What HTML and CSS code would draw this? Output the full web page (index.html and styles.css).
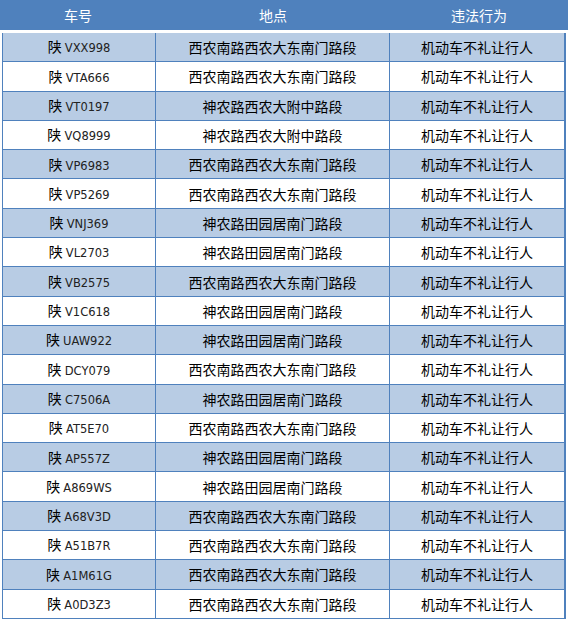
FILE: index.html
```html
<!DOCTYPE html>
<html lang="zh">
<head>
<meta charset="utf-8">
<title>违法记录</title>
<link rel="stylesheet" href="styles.css">
</head>
<body>
<div class="head">
  <div class="hc">车号</div>
  <div class="hc">地点</div>
  <div class="hc">违法行为</div>
</div>
<div class="tbl">
  <div class="row alt"><div class="c"><span class="no">陕 <span class="pl">VXX998</span></span></div><div class="c">西农南路西农大东南门路段</div><div class="c">机动车不礼让行人</div></div>
  <div class="row"><div class="c"><span class="no">陕 <span class="pl">VTA666</span></span></div><div class="c">西农南路西农大东南门路段</div><div class="c">机动车不礼让行人</div></div>
  <div class="row alt"><div class="c"><span class="no">陕 <span class="pl">VT0197</span></span></div><div class="c">神农路西农大附中路段</div><div class="c">机动车不礼让行人</div></div>
  <div class="row"><div class="c"><span class="no">陕 <span class="pl">VQ8999</span></span></div><div class="c">神农路西农大附中路段</div><div class="c">机动车不礼让行人</div></div>
  <div class="row alt"><div class="c"><span class="no">陕 <span class="pl">VP6983</span></span></div><div class="c">西农南路西农大东南门路段</div><div class="c">机动车不礼让行人</div></div>
  <div class="row"><div class="c"><span class="no">陕 <span class="pl">VP5269</span></span></div><div class="c">西农南路西农大东南门路段</div><div class="c">机动车不礼让行人</div></div>
  <div class="row alt"><div class="c"><span class="no">陕 <span class="pl">VNJ369</span></span></div><div class="c">神农路田园居南门路段</div><div class="c">机动车不礼让行人</div></div>
  <div class="row"><div class="c"><span class="no">陕 <span class="pl">VL2703</span></span></div><div class="c">神农路田园居南门路段</div><div class="c">机动车不礼让行人</div></div>
  <div class="row alt"><div class="c"><span class="no">陕 <span class="pl">VB2575</span></span></div><div class="c">西农南路西农大东南门路段</div><div class="c">机动车不礼让行人</div></div>
  <div class="row"><div class="c"><span class="no">陕 <span class="pl">V1C618</span></span></div><div class="c">神农路田园居南门路段</div><div class="c">机动车不礼让行人</div></div>
  <div class="row alt"><div class="c"><span class="no">陕 <span class="pl">UAW922</span></span></div><div class="c">神农路田园居南门路段</div><div class="c">机动车不礼让行人</div></div>
  <div class="row"><div class="c"><span class="no">陕 <span class="pl">DCY079</span></span></div><div class="c">西农南路西农大东南门路段</div><div class="c">机动车不礼让行人</div></div>
  <div class="row alt"><div class="c"><span class="no">陕 <span class="pl">C7506A</span></span></div><div class="c">神农路田园居南门路段</div><div class="c">机动车不礼让行人</div></div>
  <div class="row"><div class="c"><span class="no">陕 <span class="pl">AT5E70</span></span></div><div class="c">西农南路西农大东南门路段</div><div class="c">机动车不礼让行人</div></div>
  <div class="row alt"><div class="c"><span class="no">陕 <span class="pl">AP557Z</span></span></div><div class="c">神农路田园居南门路段</div><div class="c">机动车不礼让行人</div></div>
  <div class="row"><div class="c"><span class="no">陕 <span class="pl">A869WS</span></span></div><div class="c">神农路田园居南门路段</div><div class="c">机动车不礼让行人</div></div>
  <div class="row alt"><div class="c"><span class="no">陕 <span class="pl">A68V3D</span></span></div><div class="c">西农南路西农大东南门路段</div><div class="c">机动车不礼让行人</div></div>
  <div class="row"><div class="c"><span class="no">陕 <span class="pl">A51B7R</span></span></div><div class="c">西农南路西农大东南门路段</div><div class="c">机动车不礼让行人</div></div>
  <div class="row alt"><div class="c"><span class="no">陕 <span class="pl">A1M61G</span></span></div><div class="c">西农南路西农大东南门路段</div><div class="c">机动车不礼让行人</div></div>
  <div class="row"><div class="c"><span class="no">陕 <span class="pl">A0D3Z3</span></span></div><div class="c">西农南路西农大东南门路段</div><div class="c">机动车不礼让行人</div></div>
</div>
</body>
</html>
```
FILE: styles.css
```css
html, body {
  margin: 0;
  padding: 0;
  background: #ffffff;
}
body {
  font-family: "Noto Sans CJK SC", "Liberation Sans", sans-serif;
  font-size: 14px;
  color: #000;
  overflow: hidden;
}
.head {
  display: grid;
  grid-template-columns: 156px 234px 1fr;
  height: 30px;
  background: #4f81bd;
  color: #ffffff;
}
.hc {
  display: flex;
  align-items: center;
  justify-content: center;
  line-height: 1;
  padding-bottom: 1px;
}
.tbl {
  margin: 3px 2px 0 2px;
  border-left: 1px solid #4f81bd;
  border-right: 2px solid #4f81bd;
}
.row {
  display: grid;
  grid-template-columns: 153px 234px 1fr;
  height: 28.3px;
  border-bottom: 1px solid #4f81bd;
  background: #ffffff;
}
.row.alt {
  background: #b8cce4;
}
.c {
  display: flex;
  align-items: center;
  justify-content: center;
  line-height: 1;
  border-right: 1px solid #4f81bd;
}
.c:last-child {
  border-right: none;
}
.no {
  white-space: pre;
}
.pl {
  font-family: "DejaVu Sans", "Liberation Sans", sans-serif;
  font-size: 11.5px;
  color: #222;
}
```
